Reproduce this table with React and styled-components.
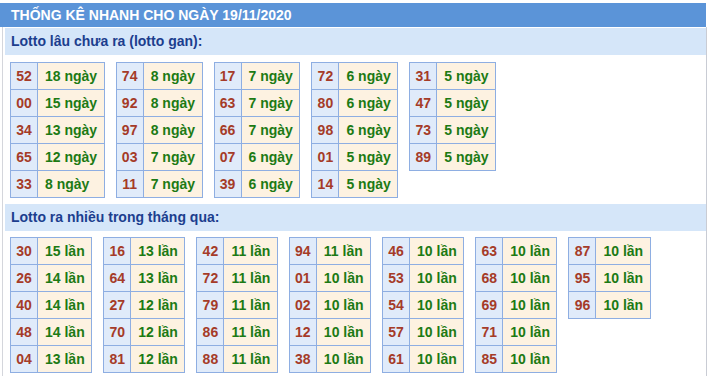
import styled, { createGlobalStyle } from "styled-components";

const GlobalStyle = createGlobalStyle`
  body {
    margin: 0;
    padding-top: 3px;
    background: #fff;
    font-family: "Liberation Sans", Arial, sans-serif;
  }
`;

const Panel = styled.div`
  width: 707px;
`;

const Header = styled.div`
  width: 706px;
  height: 24px;
  line-height: 25px;
  box-sizing: border-box;
  padding-left: 11px;
  background-color: #5b94d8;
  color: #fff;
  font-size: 14px;
  font-weight: bold;
`;

const Body = styled.div`
  margin-left: 2px;
  width: 705px;
  box-sizing: border-box;
  border-left: 1px solid #d4d6dc;
  border-right: 1px solid #c9ccd4;
  padding-top: 1px;
  padding-bottom: 5px;
`;

const SubHeader = styled.div`
  margin-left: 2px;
  height: 27px;
  line-height: 27px;
  padding-left: 6px;
  background-color: #d5e6f9;
  color: #1c3e8e;
  font-size: 14px;
  font-weight: bold;
`;

const TableRow = styled.div`
  display: flex;
  align-items: flex-start;
  gap: 11px;
  padding: 6.5px 0 6px 7px;
`;

const StatTable = styled.table`
  border-collapse: collapse;
  font-family: "Liberation Sans", Arial, sans-serif;
  font-size: 14px;
  font-weight: bold;

  td {
    font-family: "Liberation Sans", Arial, sans-serif;
    font-size: 14px;
    font-weight: bold;
    border: 1px solid #8eaee2;
    height: 27px;
    box-sizing: border-box;
    padding: 0;
    white-space: nowrap;
  }
`;

const NumCell = styled.td`
  background-color: #e0ebfa;
  color: #a53b28;
  text-align: center;
  width: 27px;
`;

const ValueCell = styled.td`
  background-color: #fdf2e1;
  color: #1c7a14;
  padding: 0 6.5px 0 7px !important;
`;

const gan = [
  [["52", 18], ["00", 15], ["34", 13], ["65", 12], ["33", 8]],
  [["74", 8], ["92", 8], ["97", 8], ["03", 7], ["11", 7]],
  [["17", 7], ["63", 7], ["66", 7], ["07", 6], ["39", 6]],
  [["72", 6], ["80", 6], ["98", 6], ["01", 5], ["14", 5]],
  [["31", 5], ["47", 5], ["73", 5], ["89", 5]],
];

const nhieu = [
  [["30", 15], ["26", 14], ["40", 14], ["48", 14], ["04", 13]],
  [["16", 13], ["64", 13], ["27", 12], ["70", 12], ["81", 12]],
  [["42", 11], ["72", 11], ["79", 11], ["86", 11], ["88", 11]],
  [["94", 11], ["01", 10], ["02", 10], ["12", 10], ["38", 10]],
  [["46", 10], ["53", 10], ["54", 10], ["57", 10], ["61", 10]],
  [["63", 10], ["68", 10], ["69", 10], ["71", 10], ["85", 10]],
  [["87", 10], ["95", 10], ["96", 10]],
];

const Section = ({ title, groups, unit }) => (
  <>
    <SubHeader>{title}</SubHeader>
    <TableRow>
      {groups.map((rows, i) => (
        <StatTable key={i}>
          <tbody>
            {rows.map(([num, count]) => (
              <tr key={num}>
                <NumCell>{num}</NumCell>
                <ValueCell>
                  {count} {unit}
                </ValueCell>
              </tr>
            ))}
          </tbody>
        </StatTable>
      ))}
    </TableRow>
  </>
);

export default function App() {
  return (
    <>
      <GlobalStyle />
      <Panel>
        <Header>THỐNG KÊ NHANH CHO NGÀY 19/11/2020</Header>
        <Body>
          <Section title="Lotto lâu chưa ra (lotto gan):" groups={gan} unit="ngày" />
          <Section title="Lotto ra nhiều trong tháng qua:" groups={nhieu} unit="lần" />
        </Body>
      </Panel>
    </>
  );
}
